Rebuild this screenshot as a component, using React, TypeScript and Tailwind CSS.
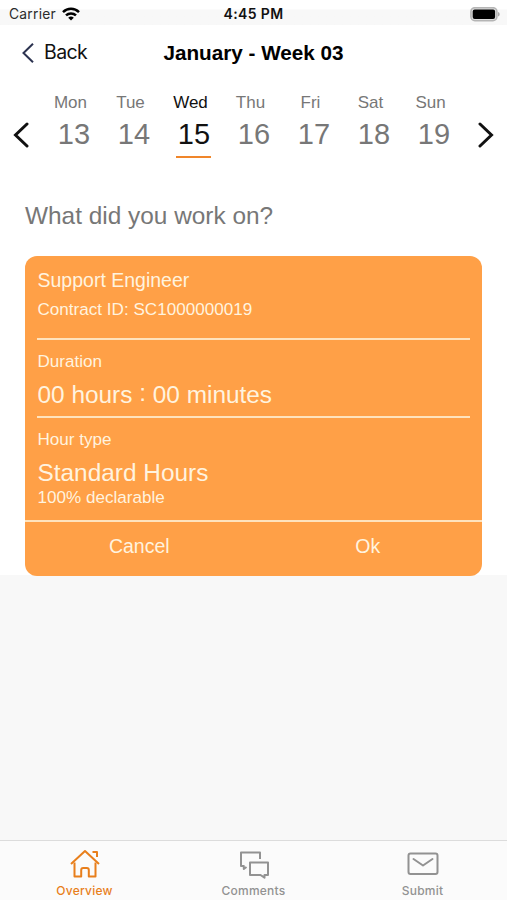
import { useState } from "react";
import clsx from "clsx";

const days = [
  { name: "Mon", date: 13 },
  { name: "Tue", date: 14 },
  { name: "Wed", date: 15 },
  { name: "Thu", date: 16 },
  { name: "Fri", date: 17 },
  { name: "Sat", date: 18 },
  { name: "Sun", date: 19 },
];

const StatusBar = () => (
  <div className="grid h-[25px] grid-cols-3 items-center bg-linear-to-b from-white from-35% to-[#f8f8f8] to-40% pt-[3px] pr-[7px] pl-[9px] font-['Inter',sans-serif] text-[14px] leading-5 text-[#111]">
    <div className="flex items-center gap-1.5">
      <span className="text-[13.8px] tracking-[0.25px] text-[#2b2b2b]">Carrier</span>
      <svg width="18" height="14" viewBox="0 0 18 14" fill="none" stroke="#000" strokeWidth="2.5">
        <path d="M1 5.1a11.5 11.5 0 0 1 16 0" />
        <path d="M4 8.4a7.2 7.2 0 0 1 10 0" />
        <path d="M9 13.6 6.2 10.8a4 4 0 0 1 5.6 0z" fill="#000" stroke="none" />
      </svg>
    </div>
    <div className="pr-[2px] text-center font-semibold tracking-[0.35px] whitespace-nowrap">4:45 PM</div>
    <div className="flex justify-end">
      <svg width="30" height="15" viewBox="0 0 30 15">
        <rect x="0.9" y="0.7" width="26" height="13" rx="4" fill="#ddd" stroke="#b5b5b5" strokeWidth="1.6" />
        <rect x="2.7" y="2.5" width="22.4" height="9.4" rx="2" fill="#000" />
        <path d="M28 5v4.6a2.4 2.4 0 0 0 0-4.6z" fill="#aaa" />
      </svg>
    </div>
  </div>
);

const Header = () => (
  <header className="grid h-[55px] grid-cols-[1fr_auto_1fr] items-center px-[22px]">
    <button className="flex items-center gap-2.5 pt-px text-left font-['Inter',sans-serif] text-[19.5px] tracking-[-0.6px] text-[#111]">
      <svg width="12" height="20" viewBox="0 0 12 20" fill="none" stroke="#2c3350" strokeWidth="2">
        <path d="M11 .8 1.5 10 11 19.2" />
      </svg>
      Back
    </button>
    <h1 className="pt-px text-[20.7px] font-bold text-black">January - Week 03</h1>
  </header>
);

const Arrow = ({ flipped = false }: { flipped?: boolean }) => (
  <svg
    className={clsx("mt-[30px]", flipped && "rotate-180")}
    width="16"
    height="26"
    viewBox="0 0 16 26"
    fill="none"
    stroke="#111"
    strokeWidth="3"
    strokeLinecap="round"
  >
    <path d="M14 2 2.5 13 14 24" />
  </svg>
);

const Tab = ({ label, active, children }: { label: string; active?: boolean; children: React.ReactNode }) => (
  <button className={clsx("flex flex-col items-center pt-1.5", active ? "text-[#e87f1c]" : "text-[#929292]")}>
    <svg
      width="32"
      height="32"
      viewBox="0 0 32 32"
      fill="none"
      stroke="currentColor"
      strokeWidth="2"
      strokeLinejoin="round"
    >
      {children}
    </svg>
    <span className="mt-1 text-[12px] leading-4 font-medium tracking-[0.25px]">{label}</span>
  </button>
);

export default function App() {
  const [selected, setSelected] = useState(15);

  return (
    <div className="flex h-[900px] w-[507px] flex-col overflow-hidden bg-[#f8f8f8] font-['Liberation_Sans',Arial,sans-serif]">
      <StatusBar />
      <main className="h-[550px] bg-white">
        <Header />
        <div className="flex h-[96px] pt-[12px] pr-[13px] pl-[13px]">
          <Arrow />
          <div className="ml-[15px] grid w-[420px] grid-cols-7">
            {days.map((day) => (
              <button
                key={day.date}
                onClick={() => setSelected(day.date)}
                className={clsx("flex flex-col", day.date === selected ? "text-[#111]" : "text-[#777]")}
              >
                <span className="w-[53px] text-center text-[17px] leading-[22px]">{day.name}</span>
                <span className="w-[60px] text-center text-[29px] leading-[40px]">{day.date}</span>
                {day.date === selected && <span className="ml-[12px] mt-[2px] h-[2px] w-[35px] bg-[#f0862a]" />}
              </button>
            ))}
          </div>
          <div className="ml-auto">
            <Arrow flipped />
          </div>
        </div>
        <h2 className="mt-[24px] pl-[25px] text-[24.4px] leading-[32px] text-[#777]">What did you work on?</h2>
        <section className="mx-[25px] mt-[24px] flex h-[320px] flex-col rounded-xl bg-[#ffa047] text-[#fff3df]">
          <div className="mx-3 h-[84px] border-b-2 border-[#ffe3bd] pt-[12px] pl-[0.5px]">
            <h3 className="text-[19.5px] leading-6">Support Engineer</h3>
            <p className="mt-2 text-[17.1px] leading-5">Contract ID: SC1000000019</p>
          </div>
          <div className="mx-3 h-[78px] border-b-2 border-[#ffe3bd] pt-[12px] pl-[0.5px]">
            <p className="text-[17.1px] leading-5">Duration</p>
            <p className="mt-2 text-[24.4px] leading-[30px]">
              00 hours <span className="relative -top-0.5">:</span> 00 minutes
            </p>
          </div>
          <div className="mx-3 h-[102px] pt-[12px] pl-[0.5px]">
            <p className="text-[17.1px] leading-5">Hour type</p>
            <p className="mt-2 text-[24.4px] leading-[30px]">Standard Hours</p>
            <p className="text-[17.1px] leading-5">100% declarable</p>
          </div>
          <div className="grid flex-1 grid-cols-2 border-t-2 border-[#ffe3bd] pb-1 text-[19.5px]">
            <button>Cancel</button>
            <button>Ok</button>
          </div>
        </section>
      </main>
      <nav className="mt-auto grid h-[60px] grid-cols-3 border-t border-[#dcdcdc] bg-[#fbfbfb] font-['Inter',sans-serif]">
        <Tab label="Overview" active>
          <path d="M2 17 16 4l14 13M23.5 5H28v5" />
          <path d="M5.5 15.500V29.500h6.700V23a2 2 0 0 1 2-2h3.600a2 2 0 0 1 2 2v6.500h6.700V15.500" />
        </Tab>
        <Tab label="Comments">
          <path d="M22 12V5.500H3V19h2.800v3l2.700-2" />
          <path d="M12 15.500h18V28h-3.500v2.700L22.500 28H12z" />
        </Tab>
        <Tab label="Submit">
          <rect x="1.500" y="6.500" width="29" height="20.500" rx="2" />
          <path d="M6.500 12 16 18.500 25.500 12" strokeLinecap="round" />
        </Tab>
      </nav>
    </div>
  );
}
